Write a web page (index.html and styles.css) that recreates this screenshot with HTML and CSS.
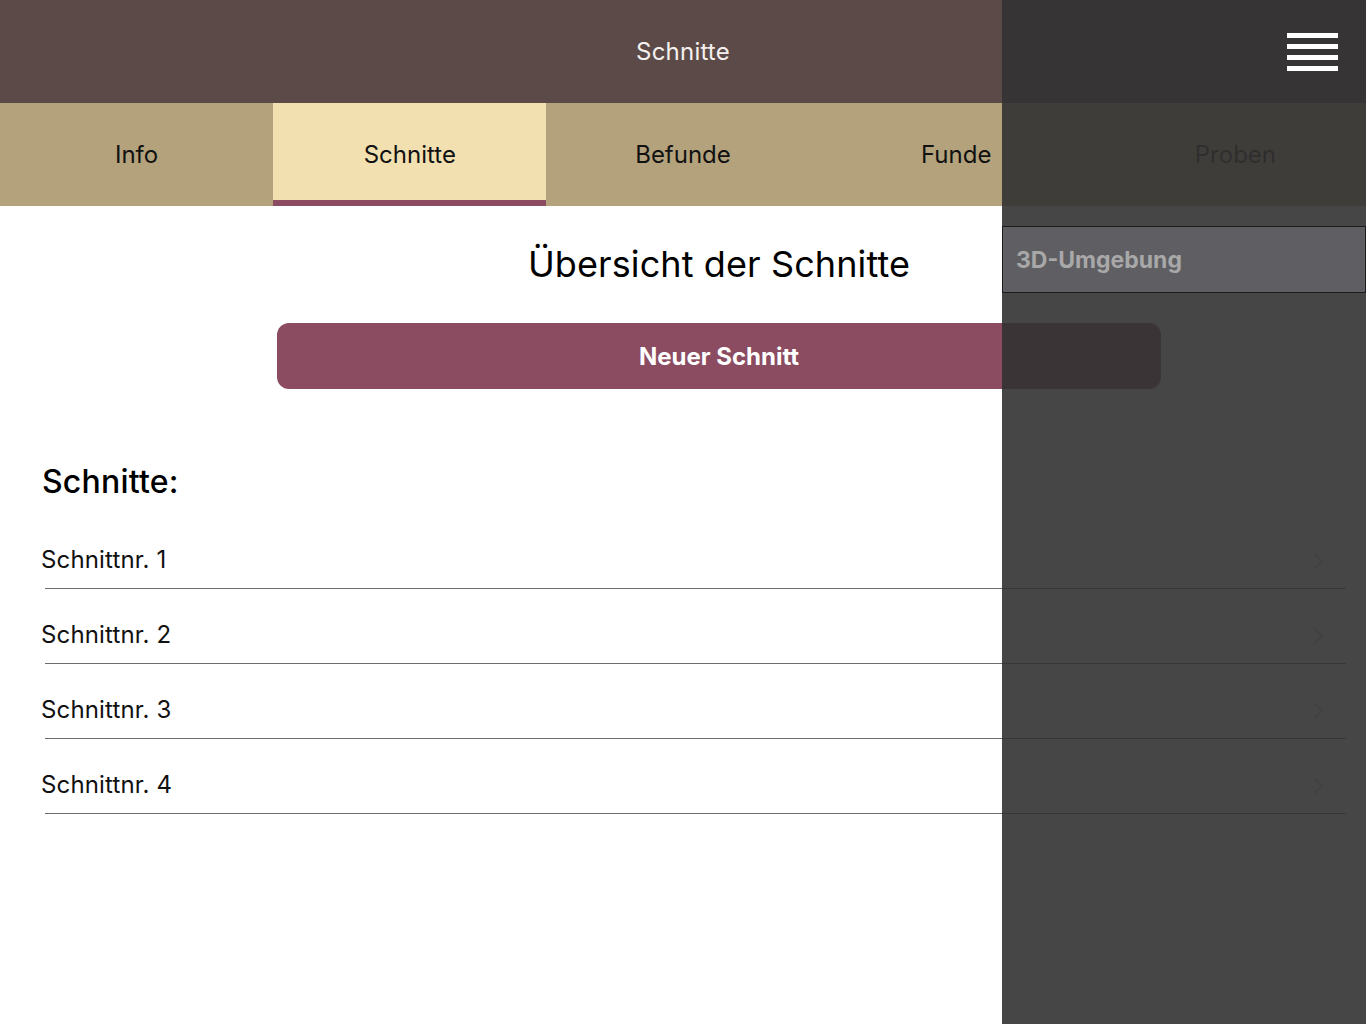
FILE: index.html
```html
<!DOCTYPE html>
<html lang="de">
<head>
<meta charset="utf-8">
<title>Schnitte</title>
<link rel="stylesheet" href="styles.css">
</head>
<body>
<div class="app">
  <header class="topbar">
    <span class="topbar-title">Schnitte</span>
  </header>
  <nav class="tabs">
    <div class="tab">Info</div>
    <div class="tab tab-active">Schnitte</div>
    <div class="tab">Befunde</div>
    <div class="tab">Funde</div>
    <div class="tab tab-last">Proben</div>
  </nav>
  <main class="content">
    <div class="center-col">
      <h1 class="page-title">Übersicht der Schnitte</h1>
      <button class="primary-btn">Neuer Schnitt</button>
    </div>
    <h2 class="section-title">Schnitte:</h2>
    <ul class="list">
      <li class="row"><span class="row-label">Schnittnr. 1</span><svg class="chev" width="12" height="20" viewBox="0 0 12 20"><path d="M2 2 L10 10 L2 18" fill="none" stroke="#c6c6c6" stroke-width="2"/></svg></li>
      <li class="row"><span class="row-label">Schnittnr. 2</span><svg class="chev" width="12" height="20" viewBox="0 0 12 20"><path d="M2 2 L10 10 L2 18" fill="none" stroke="#c6c6c6" stroke-width="2"/></svg></li>
      <li class="row"><span class="row-label">Schnittnr. 3</span><svg class="chev" width="12" height="20" viewBox="0 0 12 20"><path d="M2 2 L10 10 L2 18" fill="none" stroke="#c6c6c6" stroke-width="2"/></svg></li>
      <li class="row"><span class="row-label">Schnittnr. 4</span><svg class="chev" width="12" height="20" viewBox="0 0 12 20"><path d="M2 2 L10 10 L2 18" fill="none" stroke="#c6c6c6" stroke-width="2"/></svg></li>
    </ul>
  </main>
  <aside class="drawer">
    <div class="drawer-head">
      <div class="burger"><span></span><span></span><span></span><span></span></div>
    </div>
    <div class="drawer-item">3D-Umgebung</div>
  </aside>
</div>
</body>
</html>
```

FILE: styles.css
```css
* { box-sizing: border-box; }
html, body { margin: 0; padding: 0; }
body {
  font-family: Inter, "Noto Sans", "Liberation Sans", sans-serif;
  background: #ffffff;
  color: #111111;
}
.app {
  position: relative;
  width: 1366px;
  height: 1024px;
  overflow: hidden;
}
.topbar {
  height: 103px;
  background: #5c4a48;
  display: flex;
  align-items: center;
  justify-content: center;
}
.topbar-title {
  color: #f4f0ee;
  font-size: 24px;
  font-weight: 400;
  letter-spacing: 0.2px;
}
.tabs {
  display: grid;
  grid-template-columns: repeat(5, 1fr);
  height: 103px;
  background: #b3a27c;
}
.tab {
  display: flex;
  align-items: center;
  justify-content: center;
  font-size: 24px;
  color: #111111;
}
.tab-last {
  padding-left: 12px;
}
.tab-active {
  background: #f2e0b1;
  border-bottom: 6px solid #8b4c62;
  padding-top: 6px;
}
.content {
  padding: 0;
}
.center-col {
  padding-left: 72px;
  display: flex;
  flex-direction: column;
  align-items: center;
}
.page-title {
  margin: 36px 0 0;
  font-size: 36px;
  line-height: 44px;
  font-weight: 400;
  color: #000;
  letter-spacing: 0.1px;
}
.primary-btn {
  margin-top: 37px;
  width: 884px;
  height: 66px;
  border: none;
  border-radius: 12px;
  background: #8b4c62;
  color: #ffffff;
  font-family: inherit;
  font-size: 24px;
  font-weight: 700;
  padding: 0;
}
.section-title {
  margin: 73px 0 0 42px;
  font-size: 32px;
  line-height: 40px;
  font-weight: 500;
  color: #000;
  letter-spacing: 0.2px;
}
.list {
  list-style: none;
  margin: 12px 20px 0 45px;
  padding: 0;
}
.row {
  height: 75px;
  border-bottom: 1px solid #6c6c6c;
  display: flex;
  align-items: center;
  justify-content: space-between;
  padding: 16px 22px 0 0;
}
.row-label {
  margin-left: -4px;
  font-size: 24px;
  letter-spacing: 0.15px;
  color: #111;
}
.chev { display: block; margin-top: 4px; }
.drawer {
  position: absolute;
  top: 0;
  left: 1002px;
  width: 364px;
  height: 1024px;
  background: rgba(50, 50, 50, 0.9);
}
.drawer-head {
  height: 103px;
  display: flex;
  align-items: center;
  justify-content: flex-end;
  padding-right: 28px;
}
.burger {
  display: flex;
  flex-direction: column;
  gap: 5.5px;
  margin-top: 1px;
}
.burger span {
  display: block;
  width: 51px;
  height: 5.5px;
  background: #ffffff;
}
.drawer-item {
  margin-top: 123px;
  height: 67px;
  background: #5f5e63;
  border: 1px solid #1c1c1c;
  display: flex;
  align-items: center;
  padding-left: 13px;
  font-size: 23px;
  font-weight: 700;
  color: #a8a8a8;
}
```
